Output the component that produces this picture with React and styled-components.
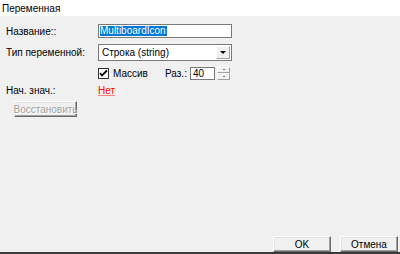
import React from 'react'
import styled, { createGlobalStyle } from 'styled-components'

const GlobalStyle = createGlobalStyle`
  html, body {
    margin: 0;
    padding: 0;
    background: #f0f0f0;
  }
  body {
    font-family: "Liberation Sans", Arial, sans-serif;
    font-size: 10px;
    color: #000;
  }
`

const Window = styled.div`
  width: 400px;
  height: 254px;
  display: flex;
  flex-direction: column;
  box-sizing: border-box;
  border-bottom: 2px solid #3a3a3a;
  overflow: hidden;
`

const TitleBar = styled.div`
  height: 16px;
  flex: none;
  background: #fff;
  padding-left: 2px;
  display: flex;
  align-items: center;
  font-size: 10px;
  color: #000;
`

const Body = styled.div`
  flex: 1;
  display: flex;
  flex-direction: column;
  justify-content: space-between;
  background: #f0f0f0;
`

const Form = styled.div`
  display: grid;
  grid-template-columns: 92px 134px;
  row-gap: 6px;
  align-items: center;
  padding: 8px 0 0 6px;
`

const Label = styled.div`
  color: #000;
  white-space: nowrap;
`

const Edit = styled.div`
  height: 14px;
  box-sizing: border-box;
  border: 1px solid #7a7a7a;
  background: #fff;
  display: flex;
  align-items: center;
  padding-left: 1px;
`

const Selected = styled.span`
  background: #0078d7;
  color: #fff;
  line-height: 10px;
  padding: 0 1px 0 0;
`

const Combo = styled.div`
  height: 17px;
  box-sizing: border-box;
  border: 1px solid #7a7a7a;
  background: #fff;
  display: flex;
  align-items: center;
  justify-content: space-between;
  padding: 1px 1px 1px 3px;
`

const DropButton = styled.div`
  width: 14px;
  height: 13px;
  box-sizing: border-box;
  background: #f0f0f0;
  border: 1px solid;
  border-color: #fff #a0a0a0 #a0a0a0 #fff;
  display: flex;
  align-items: center;
  justify-content: center;
`

const Arrow = styled.div`
  width: 0;
  height: 0;
  border-left: ${p => p.$size}px solid transparent;
  border-right: ${p => p.$size}px solid transparent;
  ${p => (p.$up ? 'border-bottom' : 'border-top')}: ${p => p.$size}px solid #000;
`

const OptionsRow = styled.div`
  grid-column: 2;
  height: 12px;
  display: flex;
  align-items: center;
`

const CheckBox = styled.div`
  width: 11px;
  height: 11px;
  box-sizing: border-box;
  border: 1px solid #333;
  background: #fff;
  display: flex;
  align-items: center;
  justify-content: center;
  margin-right: 4px;
`

const CheckText = styled.span`
  width: 52px;
`

const SpinLabel = styled.span`
  width: 25px;
`

const SpinEdit = styled.div`
  width: 25px;
  height: 13px;
  box-sizing: border-box;
  border: 1px solid #7a7a7a;
  background: #fff;
  display: flex;
  align-items: center;
  padding-left: 2px;
  margin-right: 2px;
`

const SpinButtons = styled.div`
  width: 13px;
  height: 13px;
  display: flex;
  flex-direction: column;
`

const SpinHalf = styled.div`
  flex: 1;
  box-sizing: border-box;
  background: #f0f0f0;
  border: 1px solid;
  border-color: #fff #a0a0a0 #a0a0a0 #fff;
  display: flex;
  align-items: center;
  justify-content: center;
`

const ValueLink = styled.span`
  color: #ff0000;
  text-decoration: underline;
  text-decoration-color: #ff8080;
  justify-self: start;
`

const ButtonRow = styled.div`
  grid-column: 1 / span 2;
  padding-left: 8px;
  margin-top: -1px;
`

const Button = styled.div`
  width: ${p => p.$width}px;
  height: ${p => p.$height || 16}px;
  box-sizing: border-box;
  background: #f0f0f0;
  border: 1px solid;
  border-color: #fff #696969 #696969 #fff;
  box-shadow: inset -1px -1px 0 #a0a0a0, inset 1px 1px 0 #e3e3e3;
  display: flex;
  align-items: center;
  justify-content: center;
  color: ${p => (p.$disabled ? '#a0a0a0' : '#000')};
  text-shadow: ${p => (p.$disabled ? '1px 1px 0 #fff' : 'none')};
`

const Footer = styled.div`
  display: flex;
  justify-content: flex-end;
  gap: 9px;
  padding-right: 2px;
`

const CheckMark = () => (
  <svg width="9" height="9" viewBox="0 0 9 9">
    <path d="M1 4 L3 6.5 L8 1.5" fill="none" stroke="#000" strokeWidth="1.8" />
  </svg>
)

export default function App() {
  return (
    <>
      <GlobalStyle />
      <Window>
        <TitleBar>Переменная</TitleBar>
        <Body>
          <Form>
            <Label>Название::</Label>
            <Edit>
              <Selected>MultiboardIcon</Selected>
            </Edit>

            <Label>Тип переменной:</Label>
            <Combo>
              <span>Строка (string)</span>
              <DropButton>
                <Arrow $size={3} />
              </DropButton>
            </Combo>

            <OptionsRow>
              <CheckBox>
                <CheckMark />
              </CheckBox>
              <CheckText>Массив</CheckText>
              <SpinLabel>Раз.:</SpinLabel>
              <SpinEdit>40</SpinEdit>
              <SpinButtons>
                <SpinHalf>
                  <Arrow $up $size={1.5} />
                </SpinHalf>
                <SpinHalf>
                  <Arrow $size={1.5} />
                </SpinHalf>
              </SpinButtons>
            </OptionsRow>

            <Label>Нач. знач.:</Label>
            <ValueLink>Нет</ValueLink>

            <ButtonRow>
              <Button $width={63} $disabled>Восстановить</Button>
            </ButtonRow>
          </Form>
          <Footer>
            <Button $width={58}>OK</Button>
            <Button $width={58}>Отмена</Button>
          </Footer>
        </Body>
      </Window>
    </>
  )
}
